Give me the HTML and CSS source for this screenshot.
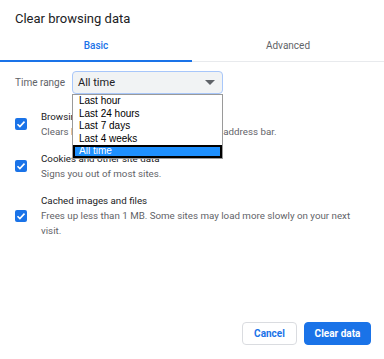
FILE: index.html
```html
<!DOCTYPE html>
<html lang="en">
<head>
    <meta charset="UTF-8">
    <title>Clear browsing data</title>
    <link rel="stylesheet" href="styles.css">
</head>
<body>
    <div class="dialog">
        <div class="title">Clear browsing data</div>
        <div class="tabs">
            <div class="tab active">Basic</div>
            <div class="tab">Advanced</div>
        </div>
        <div class="range-row">
            <div class="range-label">Time range</div>
            <div class="select-wrap">
                <div class="select">
                    <span>All time</span>
                    <svg class="arrow" width="10" height="5" viewBox="0 0 10 5"><path d="M0 0h10L5 5z" fill="#5f6368"/></svg>
                </div>
                <div class="menu">
                    <div class="option">Last hour</div>
                    <div class="option">Last 24 hours</div>
                    <div class="option">Last 7 days</div>
                    <div class="option">Last 4 weeks</div>
                    <div class="option selected">All time</div>
                </div>
            </div>
        </div>
        <div class="items">
            <div class="item">
                <div class="check"><svg width="12" height="12" viewBox="0 0 12 12"><path d="M2.5 6.2l2.4 2.4 4.6-5" fill="none" stroke="#fff" stroke-width="1.6"/></svg></div>
                <div class="item-text">
                    <div class="item-title">Browsing history</div>
                    <div class="item-desc">Clears history and autocompletions in the address bar.</div>
                </div>
            </div>
            <div class="item">
                <div class="check"><svg width="12" height="12" viewBox="0 0 12 12"><path d="M2.5 6.2l2.4 2.4 4.6-5" fill="none" stroke="#fff" stroke-width="1.6"/></svg></div>
                <div class="item-text">
                    <div class="item-title">Cookies and other site data</div>
                    <div class="item-desc">Signs you out of most sites.</div>
                </div>
            </div>
            <div class="item">
                <div class="check"><svg width="12" height="12" viewBox="0 0 12 12"><path d="M2.5 6.2l2.4 2.4 4.6-5" fill="none" stroke="#fff" stroke-width="1.6"/></svg></div>
                <div class="item-text">
                    <div class="item-title">Cached images and files</div>
                    <div class="item-desc">Frees up less than 1 MB. Some sites may load more slowly on your next visit.</div>
                </div>
            </div>
        </div>
        <div class="footer">
            <button class="btn cancel">Cancel</button>
            <button class="btn primary">Clear data</button>
        </div>
    </div>
</body>
</html>
```

FILE: styles.css
```css
body {
    margin: 0;
    padding: 0;
    background: #fff;
    font-family: Roboto, 'Liberation Sans', sans-serif;
    color: #202124;
}
.dialog {
    height: 359px;
    box-sizing: border-box;
    display: flex;
    flex-direction: column;
    border-radius: 8px;
}
.title {
    font-size: 13px;
    padding: 11px 15px 0;
    line-height: 16px;
}
.tabs {
    display: flex;
    margin-top: 12px;
    border-bottom: 1px solid #e8eaed;
}
.tab {
    flex: 1;
    text-align: center;
    font-size: 10px;
    color: #5f6368;
    padding-bottom: 7px;
    line-height: 14px;
    border-bottom: 2px solid transparent;
    margin-bottom: -1px;
}
.tab.active {
    color: #1a73e8;
    font-weight: 500;
    border-bottom-color: #1a73e8;
}
.range-row {
    display: flex;
    align-items: center;
    padding: 9px 15px 0;
}
.range-label {
    font-size: 10px;
    color: #5f6368;
    width: 57px;
}
.select-wrap {
    position: relative;
    width: 151px;
}
.select {
    height: 23px;
    box-sizing: border-box;
    border: 1px solid #a8c7fa;
    border-radius: 4px;
    background: #f1f3f4;
    display: flex;
    align-items: center;
    justify-content: space-between;
    padding: 0 7px 0 5px;
    font-size: 11px;
}
.arrow {
    display: block;
}
.menu {
    position: absolute;
    top: 23px;
    left: 0;
    width: 151px;
    box-sizing: border-box;
    background: #fff;
    border: 1px solid #9a9a9a;
    font-family: 'Liberation Sans', Arial, sans-serif;
    font-size: 10px;
    color: #000;
    z-index: 2;
}
.option {
    height: 12.5px;
    line-height: 12.5px;
    padding-left: 6px;
}
.option.selected {
    background: #1e90ff;
    color: #fff;
    outline: 2px solid #000;
    outline-offset: -2px;
}
.items {
    padding: 15px 15px 0;
    display: flex;
    flex-direction: column;
    gap: 12px;
}
.item {
    display: flex;
    align-items: center;
}
.check {
    width: 12px;
    height: 12px;
    border-radius: 2px;
    background: #1a73e8;
    margin-right: 14px;
    flex-shrink: 0;
}
.check svg {
    display: block;
}
.item-title {
    font-size: 9.75px;
    line-height: 15px;
}
.item-desc {
    font-size: 9.75px;
    line-height: 15px;
    color: #5f6368;
}
.footer {
    margin-top: auto;
    display: flex;
    justify-content: flex-end;
    gap: 7px;
    padding: 0 13px 14px;
}
.btn {
    height: 23px;
    border-radius: 4px;
    font-family: Roboto, 'Liberation Sans', sans-serif;
    font-size: 10px;
    font-weight: 700;
    padding: 0;
}
.cancel {
    width: 55px;
    background: #fff;
    border: 1px solid #dadce0;
    color: #1a73e8;
}
.primary {
    width: 67px;
    background: #1a73e8;
    border: 1px solid #1a73e8;
    color: #fff;
}
```
